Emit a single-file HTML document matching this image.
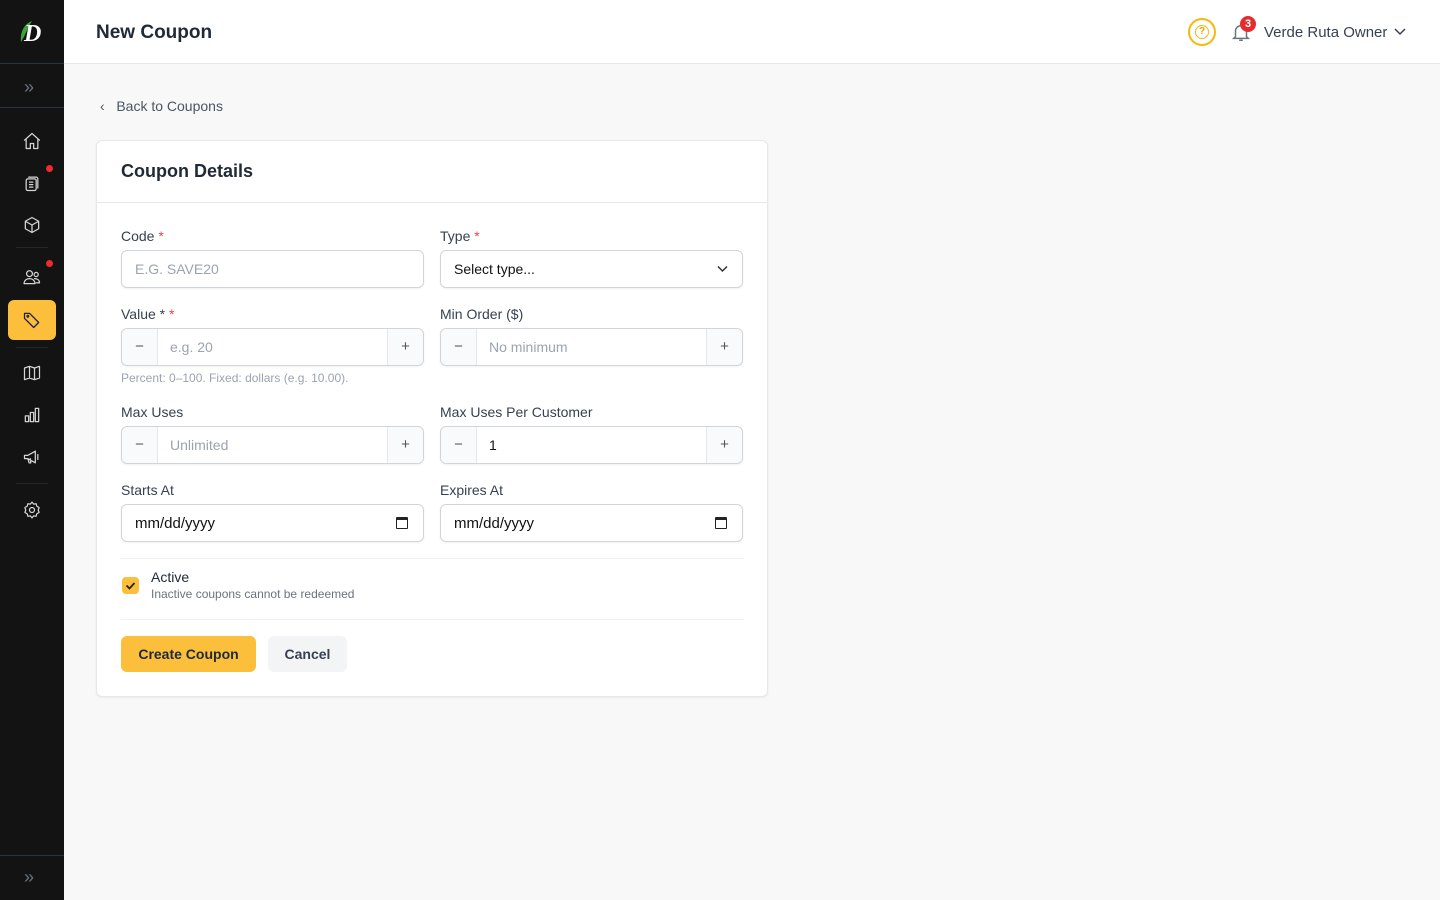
<!DOCTYPE html>
<html><head><meta charset="utf-8"><style>
*{box-sizing:border-box;margin:0;padding:0}
body{width:1440px;height:900px;font-family:"Liberation Sans",sans-serif;background:#f8f8f8;color:#1f2937;position:relative;overflow:hidden}
.sb{position:absolute;left:0;top:0;width:64px;height:900px;background:#131313}
.sb .ln{position:absolute;left:0;width:64px;height:1px;background:#2a3340}
.sb .dv{position:absolute;left:16px;width:32px;height:1px;background:#262626}
.ic{position:absolute;left:22px;width:20px;height:20px}
.ic svg{width:20px;height:20px;fill:none;stroke:#d4d4d4;stroke-width:1.5;stroke-linecap:round;stroke-linejoin:round}
.dot{position:absolute;width:7px;height:7px;border-radius:50%;background:#ef2b2b;left:46px}
.hd{position:absolute;left:64px;top:0;right:0;height:64px;background:#fff;border-bottom:1px solid #e5e7eb}
.hd h1{position:absolute;left:32px;top:22px;font-size:19px;font-weight:700;color:#1f2937}
.card{position:absolute;left:96px;top:140px;width:672px;height:557px;background:#fff;border:1px solid #e5e7eb;border-radius:6px;box-shadow:0 1px 2px rgba(0,0,0,.05)}
.ch{height:62px;border-bottom:1px solid #e5e7eb;padding:20px 24px;font-size:18px;font-weight:700}
.lb{position:absolute;font-size:14px;color:#374151}
.lb i{color:#ef4444;font-style:normal}
.in{position:absolute;width:303px;height:38px;border:1px solid #d1d5db;border-radius:6px;box-shadow:0 1px 2px rgba(0,0,0,.06);font-size:14px;color:#9ca3af;padding:10px 13px;background:#fff}
.st{padding:0}
.st .m,.st .p{position:absolute;top:0;width:36px;height:36px;background:#f9fafb;text-align:center;line-height:36px;color:#555;font-size:15px}
.st .m{left:0;border-right:1px solid #e5e7eb;border-radius:6px 0 0 6px}
.st .p{right:0;border-left:1px solid #e5e7eb;border-radius:0 6px 6px 0}
.st span.t{position:absolute;left:48px;top:10px}
.dt{color:#111;font-size:15px}
.cal{position:absolute;right:15px;top:12px;width:12px;height:12px;border:1.5px solid #222;border-top-width:3px;border-radius:1px}
</style></head><body>
<div class="sb">
 <svg style="position:absolute;left:18px;top:18px" width="28" height="28" viewBox="0 0 28 28"><path d="M3 24 C2 14 6 6 14 3 C10 9 8 16 3 24Z" fill="#3aa33a"/><text x="6" y="23" font-family="Liberation Serif" font-style="italic" font-weight="700" font-size="24" fill="#fff">D</text></svg>
 <div class="ln" style="top:63px"></div>
 <div style="position:absolute;left:24px;top:77px;color:#6b7280;font-size:18px">»</div>
 <div class="ln" style="top:107px"></div>
 <div class="ic" style="top:131px"><svg viewBox="0 0 24 24"><path d="M3 11 12 3l9 8M5 9.5V21h5v-6h4v6h5V9.5"/></svg></div>
 <div class="ic" style="top:173px"><svg viewBox="0 0 24 24"><rect x="5" y="7" width="12" height="14" rx="2"/><path d="M8 5h9a2 2 0 0 1 2 2v11M9 11h4M9 14h4M9 17h4"/></svg></div><div class="dot" style="top:165px"></div>
 <div class="ic" style="top:215px"><svg viewBox="0 0 24 24"><path d="M12 3 20 7.5v9L12 21 4 16.5v-9zM4 7.5 12 12l8-4.5M12 12v9"/></svg></div>
 <div class="dv" style="top:247px"></div>
 <div class="ic" style="top:267px"><svg viewBox="0 0 24 24"><circle cx="9" cy="8" r="3.5"/><circle cx="17" cy="9" r="2.5"/><path d="M2.5 20c0-4 3-6 6.5-6s6.5 2 6.5 6zM15 14c3 0 6 1.5 6 5h-4"/></svg></div><div class="dot" style="top:260px"></div>
 <div style="position:absolute;left:8px;top:300px;width:48px;height:40px;background:#fbbf3c;border-radius:6px"></div>
 <div class="ic" style="top:310px"><svg viewBox="0 0 24 24" style="stroke:#222"><path d="M3 10V4h6l11 11-6 6z"/><circle cx="7" cy="7.5" r="1"/></svg></div>
 <div class="dv" style="top:347px"></div>
 <div class="ic" style="top:363px"><svg viewBox="0 0 24 24"><path d="M3 6l6-2 6 2 6-2v14l-6 2-6-2-6 2zM9 4v14M15 6v14"/></svg></div>
 <div class="ic" style="top:405px"><svg viewBox="0 0 24 24"><path d="M4 20V13h4v7zM10 20V9h4v11zM16 20V4h4v16z"/></svg></div>
 <div class="ic" style="top:447px"><svg viewBox="0 0 24 24"><path d="M3 10v4h4l9 5V5L7 10zM7 14l1.5 5h2L10 14M19 9v6"/></svg></div>
 <div class="dv" style="top:483px"></div>
 <div class="ic" style="top:500px"><svg viewBox="0 0 24 24"><circle cx="12" cy="12" r="3"/><path d="M12 2.5l2 2.5 3-.5.8 3 2.7 1.5-1 3 1 3-2.7 1.5-.8 3-3-.5-2 2.5-2-2.5-3 .5-.8-3L3.5 15l1-3-1-3 2.7-1.5.8-3 3 .5z"/></svg></div>
 <div class="ln" style="top:855px"></div>
 <div style="position:absolute;left:24px;top:867px;color:#6b7280;font-size:18px">»</div>
</div>
<div class="hd"><h1>New Coupon</h1>
 <div style="position:absolute;left:1124px;top:18px;width:28px;height:28px;border:2px solid #f5b90b;border-radius:50%"><div style="position:absolute;left:5px;top:5px;width:14px;height:14px;border:1.5px solid #f5b90b;border-radius:50%;font-size:10px;color:#e0a400;text-align:center;line-height:12px;font-weight:700">?</div></div>
 <svg style="position:absolute;left:1166px;top:21px" width="22" height="22" viewBox="0 0 24 24" fill="none" stroke="#6b7280" stroke-width="1.6"><path d="M6 17V11a6 6 0 0 1 12 0v6l2 2H4zM10 21h4"/></svg>
 <div style="position:absolute;left:1176px;top:16px;width:16px;height:16px;border-radius:50%;background:#e52d2d;color:#fff;font-size:11px;font-weight:700;text-align:center;line-height:16px">3</div>
 <div style="position:absolute;left:1200px;top:24px;font-size:15px;color:#374151">Verde Ruta Owner</div>
 <svg style="position:absolute;left:1330px;top:27px" width="12" height="10" viewBox="0 0 12 10" fill="none" stroke="#374151" stroke-width="1.5"><path d="M1 2l5 5 5-5"/></svg>
</div>
<div style="position:absolute;left:100px;top:98px;font-size:14px;color:#4b5563">‹&nbsp;&nbsp;&nbsp;Back to Coupons</div>
<div class="card">
 <div class="ch">Coupon Details</div>
 <div class="lb" style="left:24px;top:87px">Code <i>*</i></div>
 <div class="in" style="left:24px;top:109px">E.G. SAVE20</div>
 <div class="lb" style="left:343px;top:87px">Type <i>*</i></div>
 <div class="in" style="left:343px;top:109px;color:#111">Select type...<svg style="position:absolute;right:14px;top:14px" width="11" height="8" viewBox="0 0 11 8" fill="none" stroke="#333" stroke-width="1.5"><path d="M1 1.5l4.5 4.5 4.5-4.5"/></svg></div>
 <div class="lb" style="left:24px;top:165px">Value * <i>*</i></div>
 <div class="in st" style="left:24px;top:187px"><div class="m">−</div><span class="t">e.g. 20</span><div class="p">+</div></div>
 <div class="lb" style="left:343px;top:165px">Min Order ($)</div>
 <div class="in st" style="left:343px;top:187px"><div class="m">−</div><span class="t">No minimum</span><div class="p">+</div></div>
 <div style="position:absolute;left:24px;top:230px;font-size:12px;color:#9ca3af">Percent: 0–100. Fixed: dollars (e.g. 10.00).</div>
 <div class="lb" style="left:24px;top:263px">Max Uses</div>
 <div class="in st" style="left:24px;top:285px"><div class="m">−</div><span class="t">Unlimited</span><div class="p">+</div></div>
 <div class="lb" style="left:343px;top:263px">Max Uses Per Customer</div>
 <div class="in st" style="left:343px;top:285px"><div class="m">−</div><span class="t" style="color:#111">1</span><div class="p">+</div></div>
 <div class="lb" style="left:24px;top:341px">Starts At</div>
 <div class="in dt" style="left:24px;top:363px">mm/dd/yyyy<div class="cal"></div></div>
 <div class="lb" style="left:343px;top:341px">Expires At</div>
 <div class="in dt" style="left:343px;top:363px">mm/dd/yyyy<div class="cal"></div></div>
 <div style="position:absolute;left:24px;top:417px;width:623px;height:1px;background:#eef0f2"></div>
 <div style="position:absolute;left:25px;top:436px;width:17px;height:17px;background:#fbbf3c;border-radius:4px"><svg width="17" height="17" viewBox="0 0 17 17" fill="none" stroke="#222" stroke-width="1.8"><path d="M4.5 8.5l3 3 5-5.5"/></svg></div>
 <div style="position:absolute;left:54px;top:428px;font-size:14px;color:#1f2937">Active</div>
 <div style="position:absolute;left:54px;top:446px;font-size:12px;color:#6b7280">Inactive coupons cannot be redeemed</div>
 <div style="position:absolute;left:24px;top:478px;width:623px;height:1px;background:#eef0f2"></div>
 <div style="position:absolute;left:24px;top:495px;width:135px;height:36px;background:#fbbf3c;border-radius:6px;font-size:14px;font-weight:700;text-align:center;line-height:36px;color:#1f2937">Create Coupon</div>
 <div style="position:absolute;left:171px;top:495px;width:79px;height:36px;background:#f3f4f6;border-radius:6px;font-size:14px;font-weight:700;text-align:center;line-height:36px;color:#374151">Cancel</div>
</div>
</body></html>
